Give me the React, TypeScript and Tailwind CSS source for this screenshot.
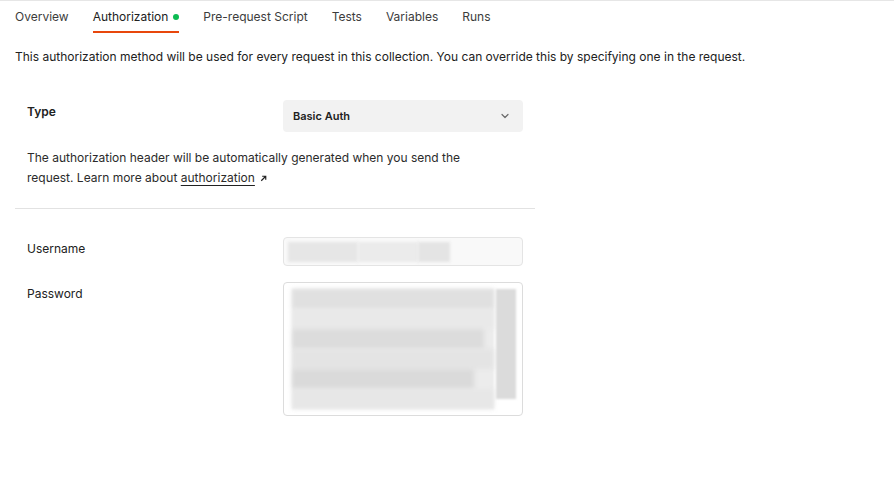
import React from 'react'

const tabs = ['Overview', 'Authorization', 'Pre-request Script', 'Tests', 'Variables', 'Runs']

const Chevron = () => (
  <svg width="12" height="12" viewBox="0 0 12 12" fill="none" stroke="#6b6b6b" strokeWidth="1.2">
    <path d="M3 4.5 L6 7.5 L9 4.5" strokeLinecap="round" strokeLinejoin="round" />
  </svg>
)

const ArrowOut = () => (
  <svg width="9" height="9" viewBox="0 0 10 10" fill="none" stroke="#212121" strokeWidth="1.3">
    <path d="M2.5 7.5 L7.5 2.5 M3.5 2.5 H7.5 V6.5" />
  </svg>
)

// blurred placeholder strip (masked secret)
const Smudge = ({ w, tone }: { w: string; tone: string }) => (
  <div className={`h-[20px] ${w} ${tone} blur-[2px]`} />
)

export default function App() {
  return (
    <div className="w-[894px] h-[496px] bg-white border-t border-[#e6e6e6] font-['Inter',sans-serif] text-[#212121]">
      {/* tabs */}
      <div className="flex gap-6 pl-[15px] h-[32px]">
        {tabs.map((t) => {
          const active = t === 'Authorization'
          return (
            <div
              key={t}
              className={`flex items-center gap-[5px] pt-[2px] text-[12px] ${
                active ? 'text-[#212121] border-b-2 border-[#e8470c]' : 'text-[#3c3c3c] border-b-2 border-transparent'
              }`}
            >
              {t}
              {active && <span className="w-[6px] h-[6px] rounded-full bg-[#0cbb52]" />}
            </div>
          )
        })}
      </div>

      <p className="mt-[15px] pl-[15px] text-[12px] leading-[18px] text-[#212121]">
        This authorization method will be used for every request in this collection. You can override this by specifying one in the request.
      </p>

      <div className="ml-[15px] w-[520px]">
        <div className="pl-[12px] pr-[12px] pt-[34px] pb-[20px] border-b border-[#e2e2e2]">
          <div className="flex">
            <div className="w-[256px] pt-[4px] text-[12px] font-semibold leading-[16px]">Type</div>
            <div className="w-[240px] h-[32px] bg-[#f2f2f2] rounded-[4px] flex items-center justify-between pl-[10px] pr-[12px]">
              <span className="text-[11px] font-semibold">Basic Auth</span>
              <Chevron />
            </div>
          </div>
          <p className="mt-[16px] w-[440px] text-[12px] leading-[20px] text-[#2b2b2b]">
            The authorization header will be automatically generated when you send the request. Learn more about{' '}
            <span className="underline underline-offset-[3px] decoration-[#212121]">authorization</span>
            <span className="inline-block align-middle ml-[4px]"><ArrowOut /></span>
          </p>
        </div>

        <div className="pl-[12px] pr-[12px] pt-[28px] flex flex-col gap-[16px]">
          <div className="flex">
            <div className="w-[256px] pt-[4px] text-[12px] leading-[16px]">Username</div>
            <div className="w-[240px] h-[29px] rounded-[4px] border border-[#e4e4e4] bg-[#f9f9f9] flex items-center pl-[4px]">
              <div className="flex">
                <div className="h-[20px] w-[70px] bg-[#e6e6e6] blur-[1.5px]" />
                <div className="h-[20px] w-[60px] bg-[#ebebeb] blur-[1.5px]" />
                <div className="h-[20px] w-[32px] bg-[#e4e4e4] blur-[1.5px]" />
              </div>
            </div>
          </div>

          <div className="flex">
            <div className="w-[256px] pt-[4px] text-[12px] leading-[16px]">Password</div>
            <div className="w-[240px] h-[134px] rounded-[4px] border border-[#dcdcdc] bg-white flex pl-[8px] pt-[6px] pr-[6px] pb-[6px] gap-[2px]">
              <div className="flex-1 flex flex-col bg-[#ececec] blur-[1px]">
                <Smudge w="w-full" tone="bg-[#e0e0e0]" />
                <Smudge w="w-full" tone="bg-[#e9e9e9]" />
                <Smudge w="w-[95%]" tone="bg-[#dcdcdc]" />
                <Smudge w="w-full" tone="bg-[#e4e4e4]" />
                <Smudge w="w-[90%]" tone="bg-[#dadada]" />
                <Smudge w="w-full" tone="bg-[#e7e7e7]" />
              </div>
              <div className="w-[20px] bg-[#dbdbdb] blur-[1px] mb-[10px]" />
            </div>
          </div>
        </div>
      </div>
    </div>
  )
}
